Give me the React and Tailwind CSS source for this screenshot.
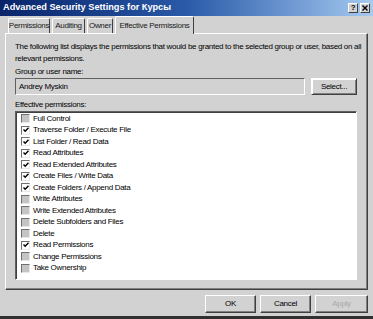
import React from 'react';

const perms = [
  ['Full Control', false],
  ['Traverse Folder / Execute File', true],
  ['List Folder / Read Data', true],
  ['Read Attributes', true],
  ['Read Extended Attributes', true],
  ['Create Files / Write Data', true],
  ['Create Folders / Append Data', true],
  ['Write Attributes', false],
  ['Write Extended Attributes', false],
  ['Delete Subfolders and Files', false],
  ['Delete', false],
  ['Read Permissions', true],
  ['Change Permissions', false],
  ['Take Ownership', false],
];

const Tab = ({ label, active, className = '' }) => (
  <div
    className={
      active
        ? `relative z-10 -mb-px h-[18px] flex items-center justify-center whitespace-nowrap bg-[#d2d2d2] border-t border-l border-white border-r border-r-[#404040] rounded-t-[2px] ${className}`
        : `h-[15px] flex items-center justify-center whitespace-nowrap border-t border-l border-white border-r border-r-[#404040] rounded-t-[2px] ${className}`
    }
  >
    {label}
  </div>
);

const Button = ({ children, disabled, className = '' }) => (
  <div
    className={`flex items-center justify-center border border-t-white border-l-white border-r-[#404040] border-b-[#404040] shadow-[inset_-1px_-1px_0_#808080] ${
      disabled ? 'text-[#a8a8a8]' : 'text-black'
    } ${className}`}
  >
    {children}
  </div>
);

const CheckBox = ({ checked }) => (
  <div
    className={`w-[9px] h-[9px] shrink-0 border border-t-[#707070] border-l-[#707070] border-r-[#e8e8e8] border-b-[#e8e8e8] flex items-center justify-center ${
      checked ? 'bg-white' : 'bg-[#c4c4c4]'
    }`}
  >
    {checked && (
      <svg width="6" height="6" viewBox="0 0 6 6">
        <path d="M0.5 2.5 L2.2 4.3 L5.5 0.8" stroke="#000" strokeWidth="1.4" fill="none" />
      </svg>
    )}
  </div>
);

export default function App() {
  return (
    <div
      className="w-[373px] h-[319px] bg-[#d2d2d2] text-[8px] tracking-[-0.3px] text-black flex flex-col border-b-[3px] border-b-[#303030] overflow-hidden"
      style={{ fontFamily: '"Liberation Sans", Arial, sans-serif' }}
    >
      {/* title bar */}
      <div className="h-[16px] shrink-0 flex items-center justify-between pl-[3px] pr-[3px] bg-gradient-to-r from-[#0a246a] via-[#2a5aa8] to-[#a6caf0]">
        <span className="text-white font-bold text-[9.2px] tracking-normal leading-none">
          Advanced Security Settings for Курсы
        </span>
        <div className="flex gap-[2px]">
          <div className="w-[10px] h-[10px] bg-[#d2d2d2] border border-t-white border-l-white border-r-[#404040] border-b-[#404040] flex items-center justify-center font-bold text-[8px] leading-none">?</div>
          <div className="w-[10px] h-[10px] bg-[#d2d2d2] border border-t-white border-l-white border-r-[#404040] border-b-[#404040] flex items-center justify-center">
            <svg width="6" height="6" viewBox="0 0 6 6">
              <path d="M0.5 0.5 L5.5 5.5 M5.5 0.5 L0.5 5.5" stroke="#000" strokeWidth="1.4" />
            </svg>
          </div>
        </div>
      </div>

      {/* tabs */}
      <div className="h-[17px] shrink-0 flex items-end gap-[2px] pl-[8px] text-[#202020]">
        <Tab label="Permissions" className="w-[42px]" />
        <Tab label="Auditing" className="w-[33px]" />
        <Tab label="Owner" className="w-[26px]" />
        <Tab label="Effective Permissions" active className="w-[79px]" />
      </div>

      {/* panel */}
      <div className="mx-[5px] h-[257px] shrink-0 border border-t-white border-l-white border-r-[#404040] border-b-[#404040] shadow-[inset_-1px_-1px_0_#808080] pl-[9px] pr-[9px] pt-[7px] flex flex-col">
        <p className="leading-[12px] -mr-[6px]">
          The following list displays the permissions that would be granted to the selected group or user, based on all relevant permissions.
        </p>
        <div className="mt-[1px] leading-[12px]">Group or user name:</div>
        <div className="flex gap-[6px] items-center">
          <div className="w-[290px] h-[17px] border border-t-[#606060] border-l-[#606060] border-r-white border-b-white pl-[3px] flex items-center">
            Andrey Myskin
          </div>
          <Button className="w-[46px] h-[17px] border-[#202020] shadow-[inset_1px_1px_0_#fff,inset_-1px_-1px_0_#808080]">
            Select...
          </Button>
        </div>
        <div className="mt-[4px] leading-[12px]">Effective permissions:</div>
        <div className="w-[342px] h-[169px] border border-t-[#606060] border-l-[#606060] border-r-white border-b-white shadow-[inset_1px_1px_0_#404040] bg-white pt-[1px] pl-[5px]">
          {perms.map(([name, checked]) => (
            <div key={name} className="h-[11.5px] flex items-center gap-[3px]">
              <CheckBox checked={checked} />
              <span className="leading-none">{name}</span>
            </div>
          ))}
        </div>
      </div>

      {/* buttons */}
      <div className="mt-[5px] flex justify-end gap-[4px] pr-[5px]">
        <Button className="w-[51px] h-[18px]">OK</Button>
        <Button className="w-[51px] h-[18px]">Cancel</Button>
        <Button disabled className="w-[53px] h-[18px]">Apply</Button>
      </div>
    </div>
  );
}
